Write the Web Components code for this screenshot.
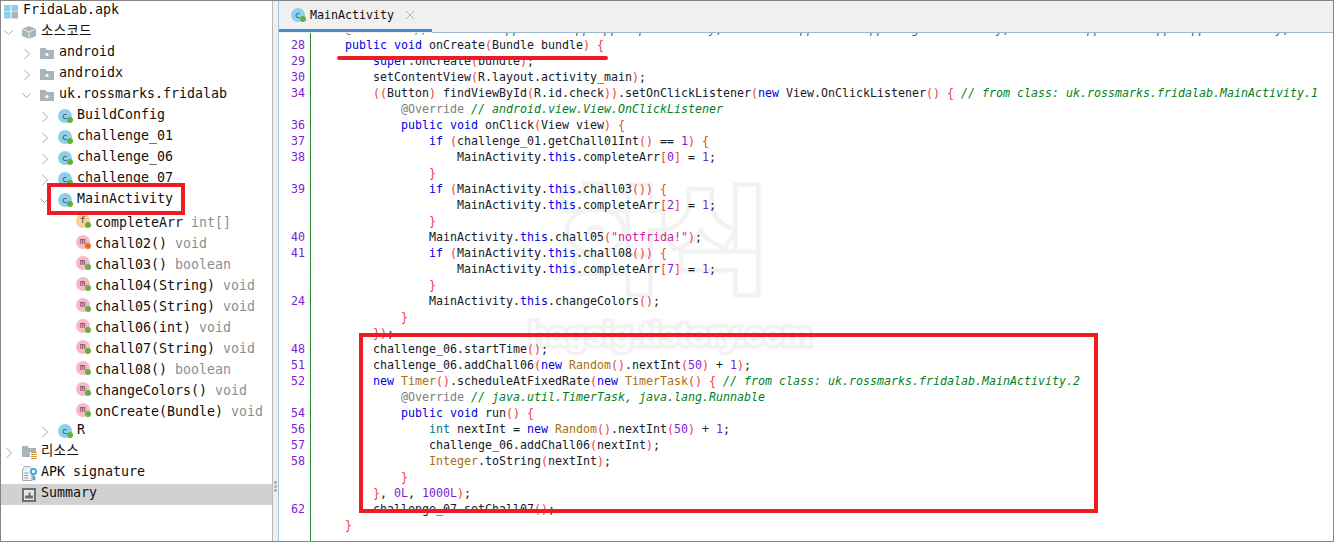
<!DOCTYPE html>
<html lang="ko">
<head>
<meta charset="utf-8">
<title>FridaLab.apk</title>
<style>
html,body{margin:0;padding:0;background:#fff;overflow:hidden}
body{width:1334px;height:542px}
</style>
</head>
<body>
<app-shell>
  <project-tree slot="tree"></project-tree>
  <code-editor slot="editor"></code-editor>
  <red-mark kind="box" x="46" y="182" w="138" h="32"></red-mark>
  <red-mark kind="box" x="358" y="332" w="739" h="180"></red-mark>
  <red-mark kind="line" x="336" y="55" w="271" h="4"></red-mark>
</app-shell>
<script>
const ICONS = {
  apk:`<svg width="15" height="14" viewBox="0 0 15 14"><rect width="6.5" height="6.5" fill="#8fcde8"/><rect x="7.5" width="6.5" height="6.5" fill="#8fcde8"/><rect y="7" width="6.5" height="6.5" fill="#8fcde8"/><rect x="7.5" y="7" width="6.5" height="6.5" fill="#a9b4bb"/></svg>`,
  module:`<svg width="15" height="14" viewBox="0 0 15 14"><path d="M7 0 14 3V10L7 13 0 10V3Z" fill="#a9b4bb"/><path d="M1 3.4 7 6V13M13 3.4 7 6" fill="none" stroke="#e8ecee" stroke-width="1"/></svg>`,
  pkg:`<svg width="15" height="12" viewBox="0 0 15 12"><path d="M0 0H5.5L7 2H14V11H0Z" fill="#a9b4bb"/><circle cx="7" cy="6.5" r="1.6" fill="#fff"/></svg>`,
  res:`<svg width="16" height="14" viewBox="0 0 16 14"><path d="M0 0H5.5L7 2H14V11H0Z" fill="#a9b4bb"/><rect x="8" y="6" width="8" height="8" fill="#fff"/><path d="M9 6.5H15M9 8.5H15M9 10.5H15M9 12.5H15" stroke="#d19a4c" stroke-width="1"/></svg>`,
  sign:`<svg width="16" height="15" viewBox="0 0 16 15"><path d="M2.5.5H7.5L10 3V14.5H.5V4Z" fill="#eef1f2" stroke="#a2adb4"/><path d="M2.5 7H6M2.5 9.5H6M2.5 12H6" stroke="#8f9aa1"/><circle cx="11.5" cy="5.5" r="2.6" fill="#fff" stroke="#3aa3dc" stroke-width="1.8"/><path d="M11.5 8V14M11.5 11.5H13.5M11.5 13.5H13.5" stroke="#3aa3dc" stroke-width="1.6" fill="none"/></svg>`,
  summary:`<svg width="15" height="14" viewBox="0 0 15 14"><rect width="14" height="14" fill="#6e6e6e"/><rect x="2" y="2" width="10" height="10" fill="#e6e6e6"/><path d="M3 10.5H11V7.5H8.5V4.5H6.5V7.5H3Z" fill="#6e6e6e"/></svg>`
};
function badge(bg, letter, dot){
  return `<svg width="16" height="15" viewBox="0 0 16 15" style="overflow:visible"><circle cx="7" cy="7" r="7" fill="${bg}"/><text x="6.6" y="${letter==='c'?9.5:8.5}" text-anchor="middle" font-family="'DejaVu Sans Mono',monospace" font-size="9.5" fill="#44525c">${letter}</text><circle cx="12" cy="11" r="3" fill="${dot}"/></svg>`;
}
ICONS.c = badge('#8ed0ec','c','#5fb23f');
ICONS.f = badge('#fbd08c','f','#5fb23f');
ICONS.m = badge('#f9b8c4','m','#5fb23f');
ICONS.mp = badge('#f9b8c4','m','#f26a21');

class AppIcon extends HTMLElement{
  connectedCallback(){
    const r = this.shadowRoot || this.attachShadow({mode:'open'});
    r.innerHTML = `<style>:host{display:flex;align-items:center;width:19px;height:21px;flex:none}svg{display:block}</style>${ICONS[this.getAttribute('name')]||''}`;
  }
}
customElements.define('app-icon',AppIcon);

const treeTpl = document.createElement('template');
treeTpl.innerHTML = `<style>
:host{display:flex;align-items:center;height:21px;box-sizing:border-box;white-space:pre;color:#101010;font:13.29px/17px "DejaVu Sans Mono","Noto Sans CJK KR",monospace}
:host([selected]){background:#d1d1d1}
.chev{width:18px;height:21px;flex:none;display:flex;align-items:center}
.chev svg{display:block}
.label{display:block;padding-bottom:4px}
.type{color:#8a8f94}
:host([kind=m]) .label{padding-top:2px;padding-bottom:0}
:host([cjk]) .label{font-size:13.3px;letter-spacing:.5px}
</style><span class="chev"></span><app-icon></app-icon><span class="label"><slot></slot><span class="type"></span></span>`;
class TreeRow extends HTMLElement{
  connectedCallback(){
    const r = this.shadowRoot || this.attachShadow({mode:'open'});
    const f = treeTpl.content.cloneNode(true);
    const level = +this.getAttribute('level');
    const chev = this.getAttribute('chev');
    const c = f.querySelector('.chev');
    this.style.paddingLeft = (level===0?3:3+18*(level-1))+'px';
    if(level===0) c.style.display='none';
    if(chev==='r') c.innerHTML='<svg width="18" height="12" viewBox="0 0 18 12"><path d="M2.5 1 7.5 6 2.5 11" fill="none" stroke="#a8a8a8"/></svg>';
    if(chev==='d') c.innerHTML='<svg width="18" height="8" viewBox="0 0 18 8"><path d="M.5 1.5 4.5 5.5 8.5 1.5" fill="none" stroke="#a8a8a8"/></svg>';
    f.querySelector('app-icon').setAttribute('name',this.getAttribute('icon'));
    const t=this.getAttribute('type');
    if(t) f.querySelector('.type').textContent=' '+t;
    r.replaceChildren(f);
  }
}
customElements.define('tree-row',TreeRow);

class ProjectTree extends HTMLElement{
  connectedCallback(){
    const r = this.shadowRoot || this.attachShadow({mode:'open'});
    const rows = [
      [0,'', 'apk','FridaLab.apk'],
      [1,'d','module','소스코드','',1],
      [2,'r','pkg','android'],
      [2,'r','pkg','androidx'],
      [2,'d','pkg','uk.rossmarks.fridalab'],
      [3,'r','c','BuildConfig'],
      [3,'r','c','challenge_01'],
      [3,'r','c','challenge_06'],
      [3,'r','c','challenge_07'],
      [3,'d','c','MainActivity'],
      [4,'','f','completeArr','int[]'],
      [4,'','mp','chall02()','void'],
      [4,'','m','chall03()','boolean'],
      [4,'','m','chall04(String)','void'],
      [4,'','m','chall05(String)','void'],
      [4,'','m','chall06(int)','void'],
      [4,'','m','chall07(String)','void'],
      [4,'','m','chall08()','boolean'],
      [4,'','m','changeColors()','void'],
      [4,'','m','onCreate(Bundle)','void'],
      [3,'r','c','R'],
      [1,'r','res','리소스','',1],
      [1,'','sign','APK signature'],
      [1,'','summary','Summary']
    ];
    r.innerHTML = `<style>:host{display:block;width:271px;flex:none;background:#fff}</style>`+
      rows.map((x,i)=>{
        const kind = x[2]==='c'?'c':(x[2]==='f'||x[2]==='m'||x[2]==='mp')?'m':'n';
        return `<tree-row level="${x[0]}" chev="${x[1]}" icon="${x[2]}" kind="${kind}" type="${x[4]||''}"${x[5]?' cjk':''}${i===23?' selected':''}>${x[3]}</tree-row>`;
      }).join('');
  }
}
customElements.define('project-tree',ProjectTree);

const LINES = [
 ['',4,'@Override // android.support.v7.app.AppCompatActivity, android.support.v4.app.FragmentActivity, android.support.v4.app.SupportActivity, android.app.Activity'],
 ['28',4,'public void onCreate(Bundle bundle) {'],
 ['29',8,'super.onCreate(bundle);'],
 ['30',8,'setContentView(R.layout.activity_main);'],
 ['34',8,'((Button) findViewById(R.id.check)).setOnClickListener(new View.OnClickListener() { // from class: uk.rossmarks.fridalab.MainActivity.1'],
 ['',12,'@Override // android.view.View.OnClickListener'],
 ['36',12,'public void onClick(View view) {'],
 ['37',16,'if (challenge_01.getChall01Int() == 1) {'],
 ['38',20,'MainActivity.this.completeArr[0] = 1;'],
 ['',16,'}'],
 ['39',16,'if (MainActivity.this.chall03()) {'],
 ['',20,'MainActivity.this.completeArr[2] = 1;'],
 ['',16,'}'],
 ['40',16,'MainActivity.this.chall05("notfrida!");'],
 ['41',16,'if (MainActivity.this.chall08()) {'],
 ['',20,'MainActivity.this.completeArr[7] = 1;'],
 ['',16,'}'],
 ['24',16,'MainActivity.this.changeColors();'],
 ['',12,'}'],
 ['',8,'});'],
 ['48',8,'challenge_06.startTime();'],
 ['51',8,'challenge_06.addChall06(new Random().nextInt(50) + 1);'],
 ['52',8,'new Timer().scheduleAtFixedRate(new TimerTask() { // from class: uk.rossmarks.fridalab.MainActivity.2'],
 ['',12,'@Override // java.util.TimerTask, java.lang.Runnable'],
 ['54',12,'public void run() {'],
 ['56',16,'int nextInt = new Random().nextInt(50) + 1;'],
 ['57',16,'challenge_06.addChall06(nextInt);'],
 ['58',16,'Integer.toString(nextInt);'],
 ['',12,'}'],
 ['',8,'}, 0L, 1000L);'],
 ['62',8,'challenge_07.setChall07();'],
 ['',4,'}']
];
const KW = new Set(['public','void','new','this','if','super']);
const TY = new Set(['Random','Timer','TimerTask','Integer']);
function highlight(s){
  const re=/(\/\/.*$)|("[^"]*")|(@\w+)|([A-Za-z_]\w*)|(\d+L?)|([(){}\[\]])|(.)/g;
  return s.replace(re,(m,com,str,ann,id,num,br,other)=>{
    if(com) return `<i class="com">${m}</i>`;
    if(str) return `<span class="str">${m}</span>`;
    if(ann) return `<span class="ann">${m}</span>`;
    if(id){
      if(KW.has(id)) return `<span class="kw">${m}</span>`;
      if(id==='int') return `<span class="prim">${m}</span>`;
      if(TY.has(id)) return `<span class="ty">${m}</span>`;
      return m;
    }
    if(num) return `<span class="num">${m}</span>`;
    if(br) return `<span class="br">${m}</span>`;
    return m;
  });
}
class CodeEditor extends HTMLElement{
  connectedCallback(){
    const r = this.shadowRoot || this.attachShadow({mode:'open'});
    r.innerHTML = `<style>
:host{display:flex;flex-direction:column;flex:1;min-width:0;border-left:1px solid #a9c3de;background:#fff;font:11.63px/16px "DejaVu Sans Mono",monospace;color:#16202a}
.tabs{display:flex;align-items:center;height:28px;background:#f0f0f0;padding-left:12px;flex:none;color:#0c0c0c}
.close{margin-left:12px;width:8px;height:8px;display:block}
.strip{display:flex;height:4px;background:#f0f0f0;flex:none}
.strip b{display:block;width:153px;height:3px;background:#4a88c7}
.strip u{display:block;flex:1;height:1px;margin-top:3px;background:#9db8d4;text-decoration:none}
.body{position:relative;flex:1;display:flex;overflow:hidden;min-height:0}
.wm{position:absolute;inset:0;pointer-events:none;color:#fff;-webkit-text-stroke:9px #f2f2f2;paint-order:stroke fill;font-family:"Noto Sans CJK KR","Liberation Sans",sans-serif;font-weight:900}
.wm div{position:absolute;white-space:nowrap}
.wm .big{left:282px;top:125px;font-size:112px;line-height:150px}
.wm .small{left:250px;top:281px;font-family:"Liberation Sans",sans-serif;font-weight:700;font-size:32px;line-height:40px;-webkit-text-stroke-width:7px}
.gutter{position:relative;width:31px;flex:none;border-right:1.5px solid #2b8a2b;box-sizing:content-box;margin-top:-12px;text-align:right;color:#7b22cf}
.gutter div{height:16px;padding-right:5px}
.code{position:relative;flex:1;min-width:0;margin-top:-12px;padding-left:6px;white-space:pre}
.code div{height:16px}
.kw{color:#0000e6}.ty{color:#a86f10}.prim{color:#007c84}.num{color:#7a1fd6}.br{color:#f23b3b}.str{color:#d4209f}.ann{color:#808080}.com{color:#007f20}
</style>
<div class="tabs"><app-icon name="c"></app-icon><span>MainActivity</span><svg class="close" viewBox="0 0 8 8"><path d="M0 0 8 8M8 0 0 8" stroke="#b4b4b4"/></svg></div>
<div class="strip"><b></b><u></u></div>
<div class="body">
<div class="wm"><div class="big">학식</div><div class="small">hagsig.tistory.com</div></div>
<div class="gutter">${LINES.map(l=>`<div>${l[0]}</div>`).join('')}</div>
<div class="code">${LINES.map(l=>`<div>${' '.repeat(l[1])}${highlight(l[2])}</div>`).join('')}</div>
</div>`;
  }
}
customElements.define('code-editor',CodeEditor);

class RedMark extends HTMLElement{
  connectedCallback(){
    const r = this.shadowRoot || this.attachShadow({mode:'open'});
    const a=n=>this.getAttribute(n);
    const box=a('kind')==='box';
    r.innerHTML=`<style>:host{position:absolute;left:${a('x')}px;top:${a('y')}px;width:${a('w')}px;height:${a('h')}px;box-sizing:border-box;pointer-events:none;${box?'border:4px solid #ed1c24':'background:#ed1c24;border-radius:2px'}}</style>`;
  }
}
customElements.define('red-mark',RedMark);

class AppShell extends HTMLElement{
  constructor(){
    super();
    this.attachShadow({mode:'open'}).innerHTML=`<style>
:host{display:flex;position:relative;width:1334px;height:542px;box-sizing:border-box;border:1px solid #858585;overflow:hidden;background:#fff}
.split{width:6px;flex:none;box-sizing:border-box;border-left:1px solid #b9b9b9;background:#f0f0f0;display:flex;flex-direction:column;align-items:center;gap:1px;padding-top:480px}
.split i{display:block;width:3px;height:3px;background:#b4b4b4;border-radius:1px}
.abs{display:contents}
</style><slot name="tree"></slot><div class="split"><i></i><i></i><i></i></div><slot name="editor"></slot><div class="abs"><slot></slot></div>`;
  }
}
customElements.define('app-shell',AppShell);
</script>
</body>
</html>
